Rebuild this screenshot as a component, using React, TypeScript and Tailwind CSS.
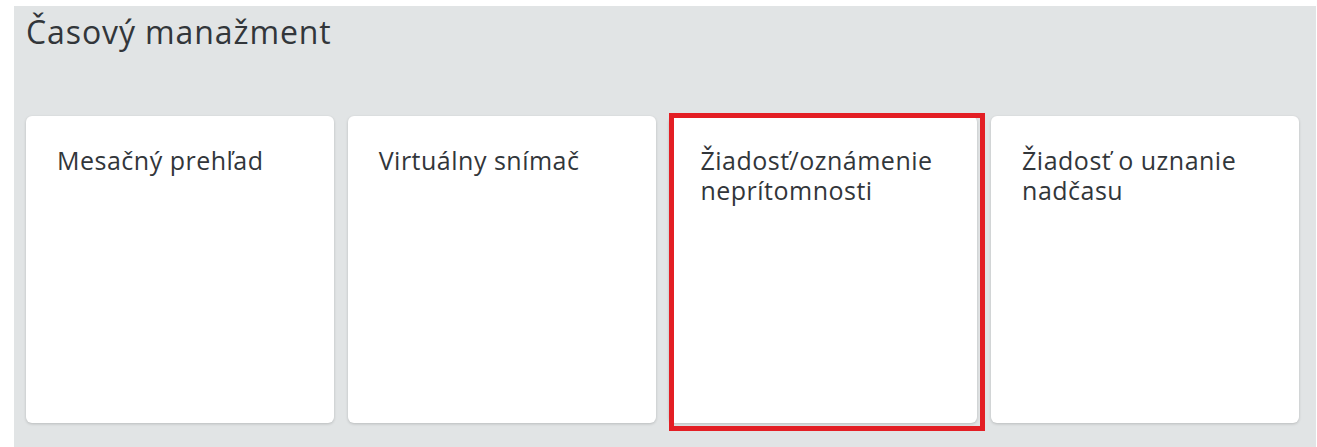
const tiles = [
  { title: 'Mesačný prehľad' },
  { title: 'Virtuálny snímač' },
  { title: 'Žiadosť/oznámenie neprítomnosti', marked: true },
  { title: 'Žiadosť o uznanie nadčasu' },
];

export default function App() {
  return (
    <div className="h-[447px] w-[1317px] bg-white pl-[14px] pt-[6px] font-['Open_Sans',sans-serif]">
      <section className="h-full w-[1302px] bg-[#e1e4e5] pl-[12px] pr-[16px]">
        <h2 className="pt-[6px] text-[32px] leading-[40px] tracking-[0.9px] text-[#32363a]">Časový manažment</h2>

        <div className="mt-[64px] flex gap-[13.7px]">
          {tiles.map((t) => (
            <div key={t.title} className="relative h-[307px] w-[308px]">
              <div className="h-full w-full rounded-[6px] bg-white px-[31px] pt-[29px] shadow-[0_1px_3px_rgba(0,0,0,0.18)]">
                <p className="text-[25px] leading-[30px] tracking-[0.5px] text-[#32363a]">{t.title}</p>
              </div>
              {t.marked && (
                <div className="pointer-events-none absolute -top-[3px] -right-[8px] -bottom-[8px] left-0 border-[5px] border-[#e31e24]" />
              )}
            </div>
          ))}
        </div>
      </section>
    </div>
  );
}
